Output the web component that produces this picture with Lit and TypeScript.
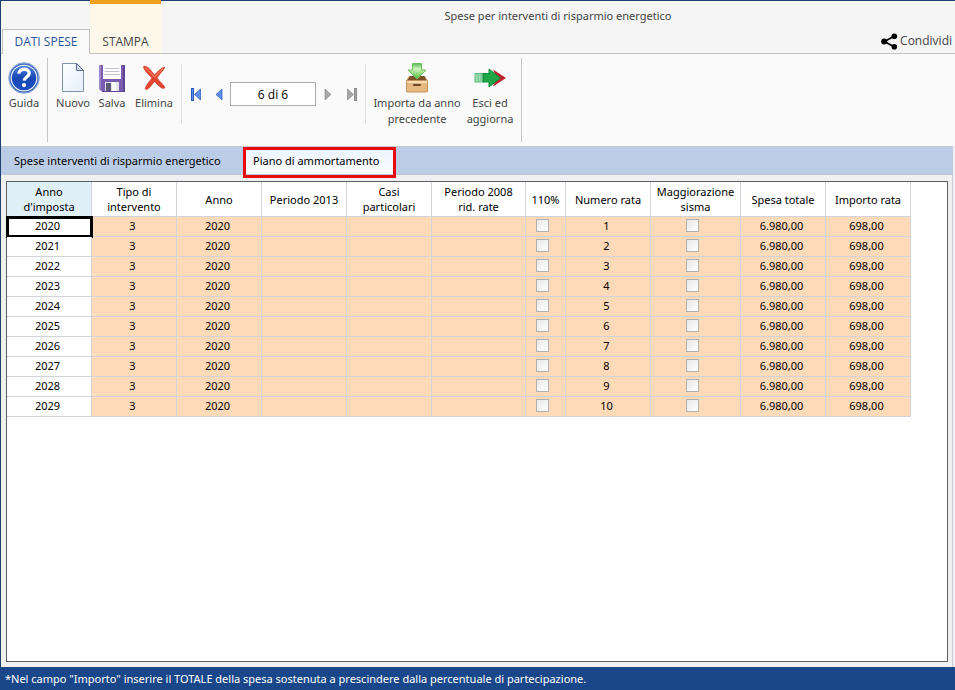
import { LitElement, html, css, svg } from "lit";
import { customElement, state } from "lit/decorators.js";

interface Rata {
  annoImposta: number;
  tipo: string;
  anno: string;
  numero: number;
  spesa: string;
  importo: string;
}

const RATE: Rata[] = Array.from({ length: 10 }, (_, i) => ({
  annoImposta: 2020 + i,
  tipo: "3",
  anno: "2020",
  numero: i + 1,
  spesa: "6.980,00",
  importo: "698,00",
}));

const COLUMNS = [
  { label: "Anno d'imposta", cls: "w85 current" },
  { label: "Tipo di intervento", cls: "w85" },
  { label: "Anno", cls: "w85" },
  { label: "Periodo 2013", cls: "w85" },
  { label: "Casi particolari", cls: "w85" },
  { label: "Periodo 2008 rid. rate", cls: "w94" },
  { label: "110%", cls: "w40" },
  { label: "Numero rata", cls: "w85" },
  { label: "Maggiorazione sisma", cls: "w90" },
  { label: "Spesa totale", cls: "w85" },
  { label: "Importo rata", cls: "w85" },
];

const iconHelp = svg`<svg width="32" height="32" viewBox="0 0 32 32" aria-hidden="true">
  <defs><linearGradient id="h" x1="0" y1="0" x2="0" y2="1"><stop offset="0" stop-color="#4a7fe0"/><stop offset=".5" stop-color="#1848b4"/><stop offset="1" stop-color="#1c4fc4"/></linearGradient></defs>
  <circle cx="16" cy="16" r="15.4" fill="#fff" stroke="#8fa9cf" stroke-width="1"/>
  <circle cx="16" cy="16" r="14" fill="#fff" stroke="#3f6cc0" stroke-width="1.4"/>
  <circle cx="16" cy="16" r="12.3" fill="url(#h)"/>
  <path d="M10.8 11.6C11.3 5.7 21.4 5.9 21.2 11.4C21.1 15 16.6 15 16.2 18.6" fill="none" stroke="#fff" stroke-width="3.3"/>
  <circle cx="16" cy="23.1" r="2.1" fill="#fff"/></svg>`;

const iconNew = svg`<svg width="24" height="32" viewBox="0 0 24 32" aria-hidden="true">
  <defs><linearGradient id="n" x1="0" y1="0" x2="1" y2="1"><stop offset="0" stop-color="#fff"/><stop offset="1" stop-color="#e3eefb"/></linearGradient></defs>
  <path d="M1.5 1.5H16L22.5 8.5V29.5H1.5Z" fill="url(#n)" stroke="#8193ac"/>
  <path d="M15.5 1.5V8.5H22.5Z" fill="#cbd6e6" stroke="#5d6f8c"/></svg>`;

const iconSave = svg`<svg width="28" height="32" viewBox="0 0 28 32" aria-hidden="true">
  <path d="M1 3H26.5V29.5H4L1 27Z" fill="#7a5db0"/>
  <path d="M1 3H3V28L1 27Z" fill="#9b86c8"/>
  <path d="M25 3H27V30H4V29H25Z" fill="#5e4594"/>
  <rect x="5" y="3" width="18" height="14" fill="#fbfbfd"/>
  <path d="M6.5 6.500H21.500M6.500 9.500H21.500M6.500 12.500H21.500" stroke="#c4c4cf"/>
  <rect x="7" y="20" width="14" height="9" fill="#e3e3ec"/>
  <rect x="8" y="21" width="5" height="8" fill="#5e5878"/>
  <path d="M14 20H18V29H14Z" fill="#f8f8fb"/></svg>`;

const iconDelete = svg`<svg width="24" height="32" viewBox="0 0 24 32" aria-hidden="true">
  <path d="M1.500 4.500C5 3.500 7 6 12.500 13C16 9 19 6 22.500 5C23 7 18.500 10.500 15 16C18 20 21 22 23 25.500C21 27.500 19 26.500 12.500 19.500C9.500 23 7.500 27 4 27.500C2.500 27 3 24.500 10 16C6 11.500 2 9 1.500 4.500Z" fill="#e5452f" stroke="#c93422" stroke-width=".6"/>
  <path d="M3 6C7 8 9 12 12.500 15L21 6.500" fill="none" stroke="#f47b60" stroke-width="1.200"/></svg>`;

const iconImport = svg`<svg width="24" height="32" viewBox="0 0 24 32" aria-hidden="true">
  <defs><linearGradient id="a" x1="0" y1="0" x2="0" y2="1"><stop offset="0" stop-color="#5cb85a"/><stop offset=".35" stop-color="#d2f5bd"/><stop offset="1" stop-color="#4cba3c"/></linearGradient></defs>
  <path d="M4 14H20L23 19V30H1V19Z" fill="#c89a62"/>
  <path d="M5 14H19L21.500 18.500H2.500Z" fill="#7a5128"/>
  <rect x="1.500" y="18.500" width="21" height="11.500" rx="1" fill="#e6b881" stroke="#c4945c"/>
  <path d="M2 20H22" stroke="#f6dbb4" stroke-width="2"/>
  <rect x="8" y="22" width="8" height="2" rx="1" fill="#6b4726"/>
  <path d="M7.500 1.500H16.500V8H21L12 17L3 8H7.500Z" fill="url(#a)" stroke="#6cc05c"/></svg>`;

const iconExit = svg`<svg width="32" height="32" viewBox="0 0 32 32" aria-hidden="true">
  <path d="M19 7.500L32 16L19 24.500L22.500 16Z" fill="#c31f2c"/>
  <rect x="1" y="11.500" width="9" height="8.500" fill="#9fd9b2" stroke="#5fbd80"/>
  <path d="M9 11.500H15V7L26.500 16L15 25V20H9Z" fill="#1ea545" stroke="#158a38"/>
  <path d="M4 12V20M7 12V20" stroke="#6fc68b"/></svg>`;

const iconShare = svg`<svg width="17" height="17" viewBox="0 0 17 17" aria-hidden="true">
  <path d="M13.500 3L3.500 8.500L13.500 14" fill="none" stroke="#000" stroke-width="1.800"/>
  <circle cx="13.300" cy="3.200" r="2.800"/><circle cx="3.200" cy="8.500" r="3"/><circle cx="13.300" cy="13.700" r="2.800"/></svg>`;

const navIcon = (kind: string) => {
  const blue = kind === "first" || kind === "prev";
  const fill = blue ? "#5b8fe8" : "#a8a8a8";
  const edge = blue ? "#2858b8" : "#8a8a8a";
  const bar = kind === "first" || kind === "last";
  return html`<svg width="10" height="13" viewBox="0 0 10 13" aria-hidden="true">
    ${bar && blue ? svg`<rect x=".5" y=".5" width="2" height="12" fill=${fill} stroke=${edge}/><path d="M9.500 1V12L3.500 6.500Z" fill=${fill} stroke=${edge} stroke-width=".7"/>` : ""}
    ${bar && !blue ? svg`<path d="M.5 1V12L6.500 6.500Z" fill=${fill} stroke=${edge} stroke-width=".7"/><rect x="7.500" y=".5" width="2" height="12" fill=${fill} stroke=${edge}/>` : ""}
    ${!bar && blue ? svg`<path d="M8 1V12L2 6.500Z" fill=${fill} stroke=${edge} stroke-width=".7"/>` : ""}
    ${!bar && !blue ? svg`<path d="M2 1V12L8 6.500Z" fill=${fill} stroke=${edge} stroke-width=".7"/>` : ""}
  </svg>`;
};

@customElement("app-root")
export class AppRoot extends LitElement {
  @state() private selected = 0;

  static styles = css`
    :host {
      display: flex;
      flex-direction: column;
      min-height: 100vh;
      box-sizing: border-box;
      border-top: 1px solid #1f3f73;
      border-left: 1px solid #1f3f73;
      background: #f0f0f0;
      color: #000;
      font: 11px/16px "Noto Sans", "Open Sans", sans-serif;
    }
    * { box-sizing: border-box; }
    button, input { font: inherit; color: inherit; margin: 0; }
    button { border: 0; padding: 0; background: none; cursor: pointer; }
    svg { display: block; flex: none; }

    .header {
      display: grid;
      grid-template-columns: auto 1fr;
      height: 53px;
      background: #f5f5f5;
      border-bottom: 1px solid #c3c3c3;
      color: #444;
    }
    .tabs { display: flex; align-items: flex-end; padding-left: 1px; }
    .tab, .share, .page { font-family: "Open Sans", "Noto Sans", sans-serif; font-size: 12px; }
    .tab { width: 88px; color: #2b569a; }
    .tab.active {
      height: 25px;
      margin-bottom: -1px;
      border: 1px solid #c3c3c3;
      border-bottom: 0;
      background: #fafafa;
    }
    .tab.print {
      align-self: stretch;
      width: 71px;
      padding-top: 26px;
      border-top: 4px solid #f0a020;
      margin-top: -1px;
      background: #fef8ea;
      color: #444;
    }
    .title {
      grid-area: 1 / 2;
      justify-self: center;
      margin: 0;
      padding-top: 7px;
      font-size: inherit;
      font-weight: 400;
    }
    .share {
      grid-area: 1 / 2;
      justify-self: end;
      align-self: end;
      display: flex;
      align-items: center;
      gap: 2px;
      height: 24px;
      padding-right: 3px;
      color: #444;
      text-decoration: none;
    }

    .ribbon {
      display: flex;
      align-items: flex-start;
      height: 92px;
      padding-top: 4px;
      background: #fafafa;
      color: #444;
    }
    .sep { width: 1px; height: 84px; background: #c6c6c6; }
    .sep.light { height: 60px; margin-top: 6px; background: #e0e0e0; }
    .group { display: grid; padding-top: 4px; }
    .help { grid-template-columns: 46px; }
    .edit { grid-template-columns: 44px 34px 50px; padding-left: 3px; padding-right: 2px; }
    .pager { grid-template-columns: 24px 22px 86px 24px 24px; padding: 24px 1px 0 2px; align-items: center; }
    .actions { grid-template-columns: 94px 52px; padding-left: 4px; padding-right: 5px; }
    .tool { display: flex; flex-direction: column; align-items: center; gap: 1px; align-self: start; }
    .nav { display: flex; justify-content: center; align-items: center; height: 24px; }
    .page {
      width: 100%;
      height: 24px;
      padding: 0;
      border: 1px solid #ababab;
      background: #fff;
      color: #000;
      text-align: center;
    }

    .subtabs {
      display: flex;
      height: 29px;
      margin-right: 2px;
      border-top: 1px solid #c3c8d0;
      border-bottom: 1px solid #c3c8d0;
      background: #bbcde6;
    }
    .subtab { width: 242px; padding: 0 13px; text-align: left; white-space: nowrap; }
    .subtab.active {
      position: relative;
      width: 153px;
      padding: 0 10px;
      background: linear-gradient(#eaf3fc, #fcfdff);
    }
    .subtab.active::after {
      content: "";
      position: absolute;
      inset: 0 0 -4px;
      border: 3px solid #e80a0e;
    }

    .body {
      flex: 1;
      display: flex;
      margin-right: 2px;
      padding: 6px 4px 5px 5px;
      border-right: 1px solid #c8ccd4;
    }
    .grid { flex: 1; border: 1px solid #5c5f63; background: #fff; }
    table { border-collapse: separate; border-spacing: 0; table-layout: fixed; width: 904px; }
    th, td { border-right: 1px solid #d0d4da; border-bottom: 1px solid #d0d4da; text-align: center; }
    th { height: 35px; padding: 0 5px; font-weight: 400; line-height: 15px; background: #fff; }
    th.current { background: #dff0f9; }
    td { height: 20px; padding: 0 3px 1px 0; line-height: 18px; background: #fedab8; }
    td.year { position: relative; background: #fff; }
    td.year.selected::after {
      content: "";
      position: absolute;
      inset: -1px -2px -2px -1px;
      border: 3px solid #000;
    }
    td.check { padding: 0 6px 3px 0; }
    .w40 { width: 40px; }
    .w85 { width: 85px; }
    .w90 { width: 90px; }
    .w94 { width: 94px; }
    th.w40 { padding: 0; }
    .box {
      display: block;
      appearance: none;
      width: 13px;
      height: 13px;
      margin: 0 auto;
      border: 1px solid #b0b0b0;
      background: linear-gradient(135deg, #e8e8e8, #fff);
    }

    .footer {
      height: 23px;
      margin-left: -1px;
      padding: 4px 5px 3px;
      background: #1a478a;
      color: #fff;
    }
  `;

  private tool(label: string, icon: unknown) {
    return html`<button class="tool">${icon}<span>${label}</span></button>`;
  }

  render() {
    return html`
      <header class="header">
        <nav class="tabs">
          <button class="tab active">DATI SPESE</button>
          <button class="tab print">STAMPA</button>
        </nav>
        <h1 class="title">Spese per interventi di risparmio energetico</h1>
        <a class="share" href="#">${iconShare}<span>Condividi</span></a>
      </header>

      <div class="ribbon">
        <div class="group help">${this.tool("Guida", iconHelp)}</div>
        <span class="sep"></span>
        <div class="group edit">
          ${this.tool("Nuovo", iconNew)} ${this.tool("Salva", iconSave)} ${this.tool("Elimina", iconDelete)}
        </div>
        <span class="sep light"></span>
        <div class="group pager">
          <button class="nav" aria-label="Primo">${navIcon("first")}</button>
          <button class="nav" aria-label="Precedente">${navIcon("prev")}</button>
          <input class="page" aria-label="Pagina" .value=${"6 di 6"} />
          <button class="nav" aria-label="Successivo">${navIcon("next")}</button>
          <button class="nav" aria-label="Ultimo">${navIcon("last")}</button>
        </div>
        <span class="sep light"></span>
        <div class="group actions">
          ${this.tool("Importa da anno precedente", iconImport)} ${this.tool("Esci ed aggiorna", iconExit)}
        </div>
        <span class="sep"></span>
      </div>

      <nav class="subtabs">
        <button class="subtab">Spese interventi di risparmio energetico</button>
        <button class="subtab active">Piano di ammortamento</button>
      </nav>

      <main class="body">
        <div class="grid">
          <table>
            <thead>
              <tr>${COLUMNS.map((c) => html`<th class=${c.cls} scope="col">${c.label}</th>`)}</tr>
            </thead>
            <tbody>
              ${RATE.map(
                (r, i) => html`<tr @click=${() => (this.selected = i)}>
                  <td class="year ${i === this.selected ? "selected" : ""}">${r.annoImposta}</td>
                  <td>${r.tipo}</td>
                  <td>${r.anno}</td>
                  <td></td>
                  <td></td>
                  <td></td>
                  <td class="check"><input class="box" type="checkbox" aria-label="110%" /></td>
                  <td>${r.numero}</td>
                  <td class="check"><input class="box" type="checkbox" aria-label="Maggiorazione sisma" /></td>
                  <td>${r.spesa}</td>
                  <td>${r.importo}</td>
                </tr>`
              )}
            </tbody>
          </table>
        </div>
      </main>

      <footer class="footer">*Nel campo "Importo" inserire il TOTALE della spesa sostenuta a prescindere dalla percentuale di partecipazione.</footer>
    `;
  }
}
